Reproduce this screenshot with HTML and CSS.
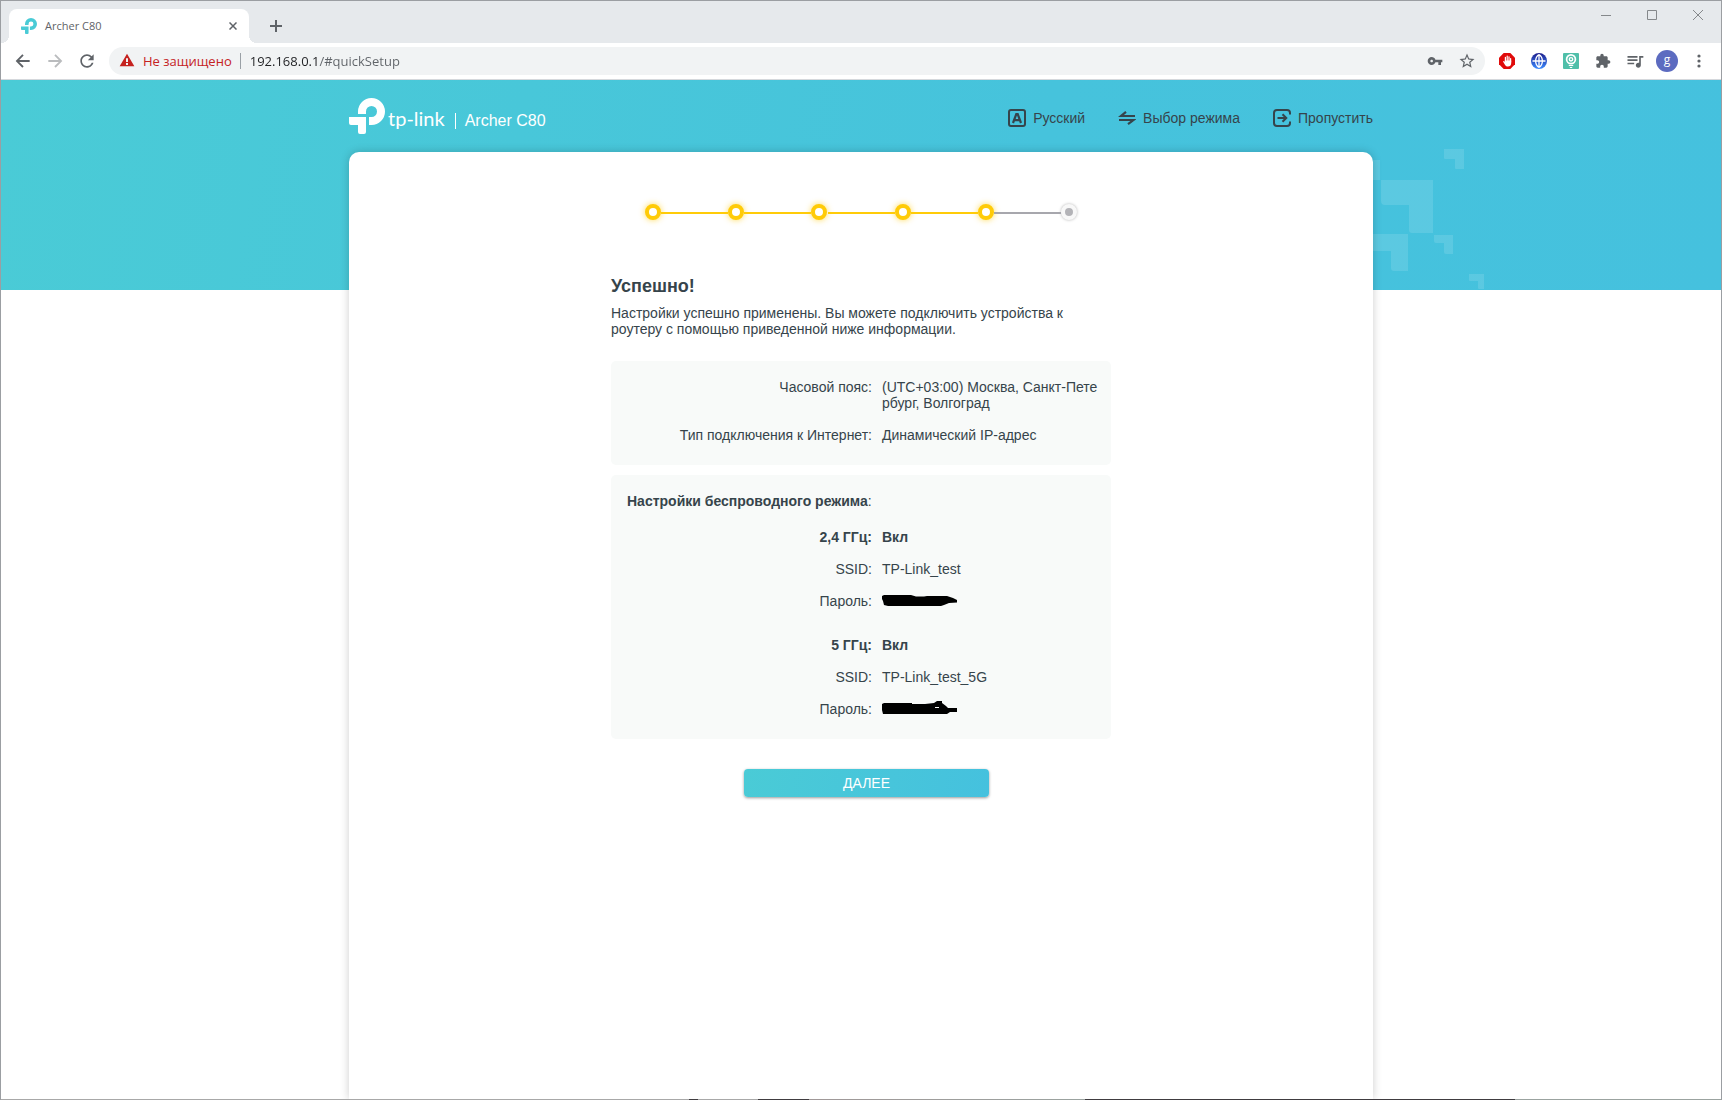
FILE: index.html
```html
<!DOCTYPE html>
<html lang="ru">
<head>
    <meta charset="UTF-8">
    <meta name="viewport" content="width=device-width, initial-scale=1.0">
    <title>Archer C80</title>
    <link rel="stylesheet" href="styles.css">
</head>
<body>
    <!-- Logo mark, used in the tab and in the header -->
    <svg class="symbols" aria-hidden="true">
        <symbol id="tp-mark" viewBox="0 0 36 36">
            <path d="M9 16v-2.500A13.500 13.500 0 1 1 22.500 27H20v-8h2.500A5.500 5.500 0 1 0 17 13.500V16z"/>
            <path d="M0 19h17v15a2 2 0 0 1-2 2h-4a2 2 0 0 1-2-2v-7H2a2 2 0 0 1-2-2z"/>
        </symbol>
    </svg>

    <div class="window">
        <!-- Tabs -->
        <div class="tab-strip">
            <div class="tab">
                <svg class="tab-icon"><use href="#tp-mark"/></svg>
                <span class="tab-title">Archer C80</span>
                <button type="button" class="tab-close" aria-label="Закрыть вкладку">
                    <svg width="8" height="8" viewBox="0 0 8 8"><path d="M0.500 0.500l7 7M7.500 0.500l-7 7" stroke="#5f6368" stroke-width="1.500"/></svg>
                </button>
            </div>
            <button type="button" class="tab-new" aria-label="Новая вкладка">
                <svg width="12" height="12" viewBox="0 0 12 12"><path d="M6 0v12M0 6h12" stroke="#5f6368" stroke-width="2"/></svg>
            </button>
            <div class="window-controls">
                <button type="button" aria-label="Свернуть">
                    <svg width="10" height="10" viewBox="0 0 10 10"><path d="M0 5.500h10"/></svg>
                </button>
                <button type="button" aria-label="Развернуть">
                    <svg width="10" height="10" viewBox="0 0 10 10"><path d="M.5.5h9v9h-9z"/></svg>
                </button>
                <button type="button" aria-label="Закрыть">
                    <svg width="10" height="10" viewBox="0 0 10 10"><path d="M0 0l10 10M10 0L0 10"/></svg>
                </button>
            </div>
        </div>

        <!-- Toolbar -->
        <div class="toolbar">
            <button type="button" class="tool" aria-label="Назад">
                <svg class="glyph-lg" viewBox="0 0 24 24"><path d="M20 10.800H7.500l5.300-5.300L11.200 4l-8 8 8 8 1.600-1.600-5.300-5.200H20z"/></svg>
            </button>
            <button type="button" class="tool tool-disabled" aria-label="Вперёд">
                <svg class="glyph-lg" viewBox="0 0 24 24"><path d="M4 10.800h12.500l-5.300-5.300L12.800 4l8 8-8 8-1.600-1.600 5.300-5.200H4z"/></svg>
            </button>
            <button type="button" class="tool" aria-label="Обновить">
                <svg class="glyph-lg" viewBox="0 0 24 24"><path d="M17.650 6.350C16.200 4.900 14.210 4 12 4c-4.420 0-7.990 3.580-7.990 8s3.570 8 7.990 8c3.730 0 6.840-2.550 7.730-6h-2.080c-.82 2.330-3.040 4-5.650 4-3.310 0-6-2.690-6-6s2.690-6 6-6c1.660 0 3.140.69 4.220 1.780L13 11h7V4l-2.350 2.350z"/></svg>
            </button>
            <div class="omnibox">
                <svg class="warning" viewBox="0 0 24 24"><path d="M1 20h22L12 1 1 20zm12.500-2h-3v-3h3v3zm0-4.500h-3V8h3v5.500z"/></svg>
                <label class="security" for="url">Не защищено</label>
                <input type="text" id="url" class="url" value="192.168.0.1/#quickSetup">
                <button type="button" class="tool" aria-label="Пароли">
                    <svg class="glyph" viewBox="0 0 24 24"><path d="M12.650 10C11.830 7.670 9.610 6 7 6c-3.310 0-6 2.690-6 6s2.690 6 6 6c2.610 0 4.830-1.670 5.650-4H17v4h4v-4h2v-4H12.650zM7 14c-1.100 0-2-.9-2-2s.9-2 2-2 2 .9 2 2-.9 2-2 2z"/></svg>
                </button>
                <button type="button" class="tool" aria-label="В закладки">
                    <svg class="glyph-md" viewBox="0 0 24 24"><path d="M22 9.240l-7.190-.62L12 2 9.190 8.630 2 9.240l5.460 4.730L5.820 21 12 17.270 18.180 21l-1.630-7.030L22 9.240zM12 15.400l-3.760 2.270 1-4.280-3.320-2.880 4.380-.38L12 6.100l1.710 4.040 4.380.38-3.320 2.880 1 4.280L12 15.400z"/></svg>
                </button>
            </div>
            <button type="button" class="tool" aria-label="Блокировщик рекламы">
                <svg width="16" height="16" viewBox="0 0 16 16">
                    <path d="M4.700 0h6.600L16 4.700v6.600L11.300 16H4.700L0 11.300V4.700z" fill="#e00b0b"/>
                    <path d="M6.400 8V4.300M8.200 8V3M10 8V3.800M11.600 9V5.600" stroke="#fff" stroke-width="1.200" stroke-linecap="round"/>
                    <path d="M5.800 7.500h6.400v2.700c0 2-1.300 3.300-3.200 3.300-1.600 0-2.600-.8-3.400-2.300L4 8.600c.3-.8 1.100-.7 1.800.3z" fill="#fff"/>
                </svg>
            </button>
            <button type="button" class="tool" aria-label="Прокси">
                <svg width="16" height="16" viewBox="0 0 16 16">
                    <defs><linearGradient id="globe" x2="0" y2="1"><stop stop-color="#1d1d8c"/><stop offset="1" stop-color="#3c8cff"/></linearGradient></defs>
                    <circle cx="8" cy="8" r="8" fill="url(#globe)"/>
                    <path d="M1.500 8h13M8 1.500v13M8 1.500C3.500 4.500 3.500 11.500 8 14.500M8 1.500c4.500 3 4.500 10 0 13" fill="none" stroke="#fff" stroke-width="1.300"/>
                </svg>
            </button>
            <button type="button" class="tool" aria-label="Подсказки">
                <svg width="16" height="16" viewBox="0 0 16 16">
                    <rect width="16" height="16" rx="1" fill="#4fbfa9"/>
                    <circle cx="8" cy="6.300" r="4.400" fill="none" stroke="#fff" stroke-width="1.700"/>
                    <circle cx="8" cy="6.300" r="1.700" fill="none" stroke="#fff" stroke-width="1.400"/>
                    <path d="M5.800 12.500h4.400M6.800 14.500h2.400" stroke="#fff" stroke-width="1.200"/>
                </svg>
            </button>
            <button type="button" class="tool" aria-label="Расширения">
                <svg class="glyph" viewBox="0 0 24 24"><path d="M20.500 11H19V7c0-1.100-.9-2-2-2h-4V3.500C13 2.120 11.880 1 10.500 1S8 2.120 8 3.500V5H4c-1.100 0-1.990.9-1.990 2v3.800H3.500c1.490 0 2.700 1.210 2.700 2.700s-1.210 2.700-2.700 2.700H2V20c0 1.100.9 2 2 2h3.800v-1.500c0-1.490 1.210-2.700 2.700-2.700 1.490 0 2.700 1.210 2.700 2.700V22H17c1.100 0 2-.9 2-2v-4h1.500c1.380 0 2.500-1.120 2.500-2.500S21.880 11 20.500 11z"/></svg>
            </button>
            <button type="button" class="tool" aria-label="Управление медиа">
                <svg class="glyph-lg" viewBox="0 0 24 24"><path d="M15 6H3v2h12V6zm0 4H3v2h12v-2zM3 16h8v-2H3v2zM17 6v8.180c-.31-.11-.65-.18-1-.18-1.660 0-3 1.340-3 3s1.340 3 3 3 3-1.340 3-3V8h3V6h-5z"/></svg>
            </button>
            <button type="button" class="tool" aria-label="Профиль"><span class="avatar">g</span></button>
            <button type="button" class="tool" aria-label="Меню">
                <svg width="4" height="14" viewBox="0 0 4 14"><circle cx="2" cy="2" r="1.600"/><circle cx="2" cy="7" r="1.600"/><circle cx="2" cy="12" r="1.600"/></svg>
            </button>
        </div>

        <!-- Router page -->
        <div class="page">
            <svg class="pattern" viewBox="0 0 120 141" aria-hidden="true">
                <path d="M0 11h7v20H0z"/>
                <path d="M8 31h52v53H39a3 3 0 0 1-3-3V56H12a4 4 0 0 1-4-4z"/>
                <path d="M71 0h20v20h-8a1 1 0 0 1-1-1v-9H72a1 1 0 0 1-1-1z"/>
                <path d="M0 85h35v37H21a3 3 0 0 1-3-3v-17H0z"/>
                <path d="M61 86h19v19h-7a2 2 0 0 1-2-2v-9h-8a2 2 0 0 1-2-2z"/>
                <path d="M96 125h15v15h-5a1 1 0 0 1-1-1v-7h-8a1 1 0 0 1-1-1z"/>
            </svg>

            <div class="container">
                <header class="header">
                    <div class="brand">
                        <svg class="brand-mark"><use href="#tp-mark"/></svg>
                        <span class="brand-name">tp-link</span>
                        <span class="model">Archer C80</span>
                    </div>
                    <nav class="menu">
                        <a href="#language">
                            <svg viewBox="0 0 18 18"><rect x="1" y="1" width="16" height="16" rx="2"/><path d="M5 14L8.300 5h1.400L13 14M6.300 11.200h5.400" stroke-width="2.200"/></svg>
                            Русский
                        </a>
                        <a href="#mode">
                            <svg viewBox="0 0 18 18"><path d="M17 7H3L8 2.800M1 11h14.500L10 15.200" stroke-width="2.200"/></svg>
                            Выбор режима
                        </a>
                        <a href="#skip">
                            <svg viewBox="0 0 18 18"><path d="M17 5.500V4a3 3 0 0 0-3-3H4a3 3 0 0 0-3 3v10a3 3 0 0 0 3 3h10a3 3 0 0 0 3-3v-1.500M4.500 9H13M9.500 5.200L13.300 9l-3.800 3.800"/></svg>
                            Пропустить
                        </a>
                    </nav>
                </header>

                <main class="card">
                    <ol class="steps">
                        <li class="done"></li>
                        <li class="done"></li>
                        <li class="done"></li>
                        <li class="done"></li>
                        <li class="done"></li>
                        <li></li>
                    </ol>

                    <div class="content">
                        <h1>Успешно!</h1>
                        <p class="intro">Настройки успешно применены. Вы можете подключить устройства к роутеру с помощью приведенной ниже информации.</p>

                        <section class="panel">
                            <dl>
                                <dt>Часовой пояс:</dt>
                                <dd>(UTC+03:00) Москва, Санкт-Петербург, Волгоград</dd>
                                <dt>Тип подключения к Интернет:</dt>
                                <dd>Динамический IP-адрес</dd>
                            </dl>
                        </section>

                        <section class="panel">
                            <h2>Настройки беспроводного режима<span>:</span></h2>
                            <dl>
                                <dt class="strong">2,4 ГГц:</dt>
                                <dd class="strong">Вкл</dd>
                                <dt>SSID:</dt>
                                <dd>TP-Link_test</dd>
                                <dt>Пароль:</dt>
                                <dd>
                                    <svg class="hidden-password" viewBox="0 0 76 16"><path d="M0 3l2-1h27l5 1.500h8l3-.5h20l3 1 3 1 4 2v2.500l-8 .5-5 2-3 1H6l-4-1-1-4-1-2z"/></svg>
                                </dd>
                            </dl>
                            <dl>
                                <dt class="strong">5 ГГц:</dt>
                                <dd class="strong">Вкл</dd>
                                <dt>SSID:</dt>
                                <dd>TP-Link_test_5G</dd>
                                <dt>Пароль:</dt>
                                <dd>
                                    <svg class="hidden-password" viewBox="0 0 76 16"><path d="M0 3l2-1h28v1h13l9-1 3-2h5v2l4 3 2 2h9v4h-7l-3 2H1l-1-4z"/><path d="M53 6.500h4" stroke="#f8faf9"/></svg>
                                </dd>
                            </dl>
                        </section>

                        <div class="actions">
                            <button type="button" class="next">ДАЛЕЕ</button>
                        </div>
                    </div>
                </main>
            </div>
        </div>
        <div class="window-bottom"></div>
    </div>
</body>
</html>
```

FILE: styles.css
```css
* {
    box-sizing: border-box;
}

body {
    margin: 0;
    font-family: Arial, "Liberation Sans", sans-serif;
    font-size: 14px;
    line-height: 16px;
    color: #36444b;
}

button {
    border: none;
    background: none;
    padding: 0;
    font-family: inherit;
    cursor: pointer;
}

.symbols {
    display: none;
}

.window {
    display: flex;
    flex-direction: column;
    min-height: 100vh;
    border: 1px solid #9b9ea2;
    border-bottom: none;
}

/* Tab strip */
.tab-strip {
    display: flex;
    height: 42px;
    padding: 8px 0 0 8px;
    background-color: #e6e9ec;
    font-family: "Segoe UI", "Open Sans", sans-serif;
}

.tab {
    position: relative;
    display: flex;
    align-items: center;
    width: 240px;
    padding: 0 12px;
    border-radius: 8px 8px 0 0;
    background-color: #fff;
}

.tab::before,
.tab::after {
    content: "";
    position: absolute;
    bottom: 0;
    width: 8px;
    height: 8px;
}

.tab::before {
    left: -8px;
    background: radial-gradient(circle at 0 0, transparent 8px, #fff 8px);
}

.tab::after {
    right: -8px;
    background: radial-gradient(circle at 100% 0, transparent 8px, #fff 8px);
}

.tab-icon {
    width: 16px;
    height: 16px;
    fill: #4acbd6;
}

.tab-title {
    flex: 1;
    margin-left: 8px;
    font-size: 11px;
    color: #5f6368;
}

.tab-close,
.tab-new {
    display: flex;
    align-items: center;
    justify-content: center;
}

.tab-new {
    width: 28px;
    margin-left: 13px;
}

.window-controls {
    display: flex;
    align-self: flex-start;
    margin-left: auto;
    padding-top: 1px;
}

.window-controls button {
    display: flex;
    justify-content: center;
    width: 46px;
}

.window-controls svg {
    fill: none;
    stroke: #85888b;
}

/* Toolbar */
.toolbar {
    display: flex;
    align-items: center;
    height: 37px;
    padding: 0 6px;
    border-bottom: 1px solid #d5d8dc;
    background-color: #fff;
    font-family: "Segoe UI", "Open Sans", sans-serif;
}

.tool {
    display: flex;
    align-items: center;
    justify-content: center;
    width: 32px;
    height: 28px;
    fill: #5f6368;
}

.tool-disabled {
    fill: #babcbe;
}

.glyph {
    width: 16px;
    height: 16px;
}

.glyph-md {
    width: 18px;
    height: 18px;
}

.glyph-lg {
    width: 20px;
    height: 20px;
}

.omnibox {
    display: flex;
    flex: 1;
    align-items: center;
    height: 28px;
    margin: 0 6px;
    padding: 0 2px 0 10px;
    border-radius: 14px;
    background-color: #f1f3f4;
}

.warning {
    width: 16px;
    height: 16px;
    fill: #c5221f;
}

.security {
    margin-left: 8px;
    padding-right: 8px;
    border-right: 1px solid #9aa0a6;
    font-size: 13px;
    color: #c5221f;
}

/* The host is dark, the rest of the address is grey */
.url {
    flex: 1;
    height: 24px;
    padding: 0 0 0 9px;
    border: none;
    outline: none;
    font-family: inherit;
    font-size: 13px;
    color: transparent;
    background: linear-gradient(to right, #202124 78px, #5f6368 78px);
    -webkit-background-clip: text;
    background-clip: text;
}

.avatar {
    width: 22px;
    height: 22px;
    border-radius: 50%;
    background-color: #5c6bc0;
    color: #fff;
    font-size: 12px;
    line-height: 20px;
    text-align: center;
}

/* Router page */
.page {
    position: relative;
    display: flex;
    flex: 1;
    justify-content: center;
    overflow: hidden;
    background: #fff linear-gradient(100deg, #4acbd6, #46c3dc 60%, #45c1de) no-repeat;
    background-size: 100% 210px;
}

.pattern {
    position: absolute;
    top: 69px;
    left: calc(50% + 512px);
    width: 120px;
    height: 141px;
    fill: rgba(255, 255, 255, 0.12);
}

.container {
    position: relative;
    display: flex;
    flex-direction: column;
    width: 1024px;
    max-width: 100%;
}

.header {
    display: flex;
    justify-content: space-between;
    height: 72px;
    padding-top: 18px;
}

.brand {
    display: flex;
    height: 36px;
    color: #fff;
}

.brand-mark {
    width: 36px;
    height: 36px;
    fill: #fff;
}

.brand-name {
    margin-left: 3px;
    font-family: Lato, sans-serif;
    font-size: 20px;
    line-height: 40px;
}

.model {
    align-self: center;
    margin: 10px 0 0 10px;
    padding-left: 9px;
    border-left: 1px solid #fff;
    font-size: 16px;
}

.menu {
    display: flex;
    gap: 33px;
    height: 40px;
}

.menu a {
    display: flex;
    align-items: center;
    gap: 7px;
    color: #36444b;
    text-decoration: none;
}

.menu svg {
    width: 18px;
    height: 18px;
    fill: none;
    stroke: #36444b;
    stroke-width: 2;
}

.card {
    flex: 1;
    padding: 52px 0 60px;
    border-radius: 10px 10px 0 0;
    background-color: #fff;
    box-shadow: 0 0 10px rgba(0, 0, 0, 0.2);
}

/* Progress steps */
.steps {
    display: flex;
    justify-content: space-between;
    width: 432px;
    margin: 0 auto;
    padding: 0;
    list-style: none;
}

.steps li {
    position: relative;
    width: 16px;
    height: 16px;
    border: 4px solid #f8f8f8;
    border-radius: 50%;
    background-color: #b3b3b7;
    box-shadow: 0 0 3px rgba(0, 0, 0, 0.3);
}

.steps .done {
    border-color: #ffcb08;
    background-color: #fff;
    box-shadow: 0 0 6px rgba(255, 203, 8, 0.7);
}

/* Line back to the previous step */
.steps li + li::before {
    content: "";
    position: absolute;
    top: 4px;
    right: 12px;
    width: 67px;
    height: 2px;
    background-color: #a7a7ad;
}

.steps .done + .done::before {
    background-color: #ffcb08;
}

/* Content */
.content {
    width: 500px;
    max-width: 100%;
    margin: 56px auto 0;
}

h1 {
    margin: 0 0 9px;
    font-size: 18px;
    line-height: 20px;
}

.intro {
    margin: 0 0 24px;
}

.panel {
    margin-bottom: 10px;
    padding: 18px 13px 22px 16px;
    border-radius: 5px;
    background-color: #f8faf9;
}

.panel h2 {
    margin: 0 0 20px;
    font-size: 14px;
    line-height: 16px;
}

.panel h2 span {
    font-weight: normal;
}

.panel dl {
    display: grid;
    grid-template-columns: 245px 1fr;
    gap: 16px 10px;
    margin: 0;
}

.panel dl + dl {
    margin-top: 28px;
}

.panel dt {
    text-align: right;
}

.panel dd {
    margin: 0;
    word-break: break-all;
}

.panel .strong {
    font-weight: bold;
}

.hidden-password {
    display: block;
    width: 76px;
    height: 16px;
}

.actions {
    display: flex;
    justify-content: center;
    padding: 20px 0 0 11px;
}

.next {
    width: 245px;
    height: 28px;
    border-radius: 4px;
    background: linear-gradient(100deg, #4acbd6, #45c1de);
    box-shadow: 0 1px 3px rgba(0, 0, 0, 0.4);
    color: #fff;
    font-size: 14px;
}

/* Desktop showing under the window edge */
.window-bottom {
    height: 1px;
    background: linear-gradient(to right, #a8a8a8 40%, #403c40 40%, #403c40 40.5%, #a8a8a8 40.5%, #a8a8a8 44%, #403c40 44%, #403c40 47%, #a09898 47%, #9ba3a0 63%, #403c40 63%, #403c40 88%, #9ba3a0 88%);
}
```
